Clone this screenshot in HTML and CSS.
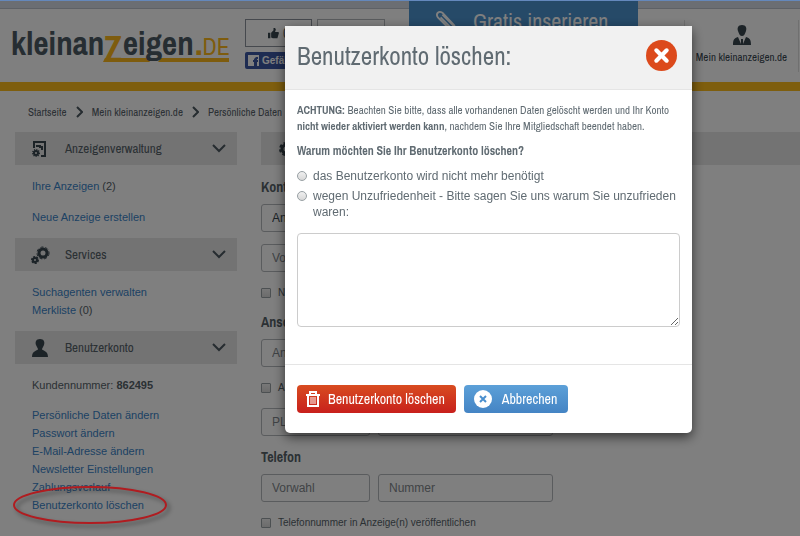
FILE: index.html
```html
<!DOCTYPE html>
<html lang="de">
<head>
<meta charset="utf-8">
<title>Benutzerkonto löschen</title>
<link rel="stylesheet" href="styles.css">
</head>
<body>
<header class="site-header">
  <a class="logo" href="#" aria-label="kleinanzeigen.de">
    <svg width="222" height="40" viewBox="0 0 222 40">
      <text class="logo-word" x="0" y="29">kleinan</text>
      <text class="logo-z" x="93" y="36">Z</text>
      <path class="logo-line" d="M94 32h42l3 4H92zM150 32h68v4h-71z"/>
      <text class="logo-word" x="112" y="29">eigen</text>
      <text class="logo-tld" x="184" y="29"><tspan class="logo-dot">.</tspan>DE</text>
    </svg>
  </a>
  <div class="social">
    <div class="like-count">
      <svg width="11" height="11" viewBox="0 0 14 14"><path fill="#38464f" d="M0 6h3v7H0zM4 6l3-3V0h2l1 2-1 3h4l1 1-2 7H6l-2-1z"/></svg>
      <span>0</span>
    </div>
    <button class="fb" type="button">
      <svg width="11" height="11" viewBox="0 0 11 11"><path fill="#fff" fill-rule="evenodd" d="M0 0h11v11H9V7h1V5H9V4h1V2H8L6 4v1H5v2h1v4H0z"/></svg>
      Gefällt mir
    </button>
  </div>
  <div class="count-box"></div>
  <a class="banner" href="#">
    <svg width="22" height="26" viewBox="0 0 24 26" fill="none" stroke="#fff" stroke-width="2"><path d="M2 9l14 14 6 2-2-7L7 4Q4 2 2 4t0 5zM5 9l12 12M7 6l12 12"/></svg>
    <span>Gratis inserieren</span>
  </a>
  <a class="account" href="#">
    <svg width="18" height="20" viewBox="0 0 18 20"><path fill="#38464f" d="M9 0c4 0 5 3 4 6s-2 5-4 5-3-2-4-5 0-6 4-6zM0 20c0-5 1-7 5-8l3 7V14h2v5l3-7c4 1 5 3 5 8z"/></svg>
    <span>Mein kleinanzeigen.de</span>
  </a>
</header>

<nav class="crumbs" aria-label="Pfad">
  <a href="#">Startseite</a>
  <svg width="7" height="12" viewBox="0 0 7 12"><path d="M1 1l5 5-5 5"/></svg>
  <a href="#">Mein kleinanzeigen.de</a>
  <svg width="7" height="12" viewBox="0 0 7 12"><path d="M1 1l5 5-5 5"/></svg>
  <a href="#">Persönliche Daten</a>
</nav>

<div class="page">
  <aside class="sidebar">
    <h2 class="bar">
      <svg width="20" height="20" viewBox="0 0 20 20"><path fill="none" stroke="#38464f" stroke-width="2" d="M4 9V3h11v14h-4"/><path fill="none" stroke="#38464f" stroke-width="2" d="M6 7h4v1h2v3"/><circle cx="6" cy="14" r="2" fill="none" stroke="#38464f" stroke-width="2"/><circle cx="6" cy="14" r="3" fill="none" stroke="#38464f" stroke-width="2" stroke-dasharray="1 1"/></svg>
      <span>Anzeigenverwaltung</span>
      <svg class="chev" width="14" height="9" viewBox="0 0 14 9"><path d="M1 1l6 6 6-6"/></svg>
    </h2>
    <ul class="links spaced">
      <li><a href="#">Ihre Anzeigen</a> (2)</li>
      <li><a href="#">Neue Anzeige erstellen</a></li>
    </ul>
    <h2 class="bar">
      <svg width="20" height="20" viewBox="0 0 20 20" fill="none" stroke="#38464f"><circle cx="13" cy="8" r="4" stroke-width="3"/><circle cx="13" cy="8" r="6" stroke-width="1" stroke-dasharray="3 2"/><circle cx="5" cy="15" r="2" stroke-width="2"/><circle cx="5" cy="15" r="3" stroke-width="2" stroke-dasharray="2 1"/></svg>
      <span>Services</span>
      <svg class="chev" width="14" height="9" viewBox="0 0 14 9"><path d="M1 1l6 6 6-6"/></svg>
    </h2>
    <ul class="links">
      <li><a href="#">Suchagenten verwalten</a></li>
      <li><a href="#">Merkliste</a> (0)</li>
    </ul>
    <h2 class="bar">
      <svg width="20" height="20" viewBox="0 0 20 20"><path fill="#38464f" d="M10 1c4 0 5 3 4 6l-2 4c0 2 6 1 6 8H2c0-7 6-6 6-8L6 7C5 4 6 1 10 1z"/></svg>
      <span>Benutzerkonto</span>
      <svg class="chev" width="14" height="9" viewBox="0 0 14 9"><path d="M1 1l6 6 6-6"/></svg>
    </h2>
    <p class="customer">Kundennummer: <b>862495</b></p>
    <ul class="links">
      <li><a href="#">Persönliche Daten ändern</a></li>
      <li><a href="#">Passwort ändern</a></li>
      <li><a href="#">E-Mail-Adresse ändern</a></li>
      <li><a href="#">Newsletter Einstellungen</a></li>
      <li><a href="#">Zahlungsverlauf</a></li>
      <li class="marked"><a href="#">Benutzerkonto löschen</a>
        <svg class="ring" width="162" height="44" viewBox="0 0 162 44"><ellipse cx="78" cy="20" rx="76" ry="18"/></svg>
      </li>
    </ul>
  </aside>

  <main class="content">
    <h2 class="bar">
      <svg width="20" height="20" viewBox="0 0 20 20" fill="none" stroke="#38464f"><circle cx="10" cy="10" r="4" stroke-width="3"/><circle cx="10" cy="10" r="6" stroke-width="2" stroke-dasharray="3 2"/></svg>
      <span>Persönliche Daten</span>
    </h2>
    <form class="data-form">
      <h3>Kontaktdaten</h3>
      <div class="row"><select class="short" aria-label="Anrede"><option>Anrede</option></select></div>
      <div class="row"><input class="short" type="text" placeholder="Vorname" aria-label="Vorname"><input class="long" type="text" placeholder="Nachname" aria-label="Nachname"></div>
      <label class="check"><input type="checkbox">Name in Anzeige(n) veröffentlichen</label>
      <h3>Anschrift</h3>
      <div class="row"><input class="full" type="text" placeholder="Anschrift" aria-label="Anschrift"></div>
      <label class="check"><input type="checkbox">Anschrift in Anzeige(n) veröffentlichen</label>
      <div class="row"><input class="short" type="text" placeholder="PLZ" aria-label="PLZ"><input class="long" type="text" placeholder="Ort" aria-label="Ort"></div>
      <h3>Telefon</h3>
      <div class="row"><input class="short" type="text" placeholder="Vorwahl" aria-label="Vorwahl"><input class="long" type="text" placeholder="Nummer" aria-label="Nummer"></div>
      <label class="check"><input type="checkbox">Telefonnummer in Anzeige(n) veröffentlichen</label>
    </form>
  </main>
</div>

<div class="backdrop">
  <form class="modal" role="dialog" aria-labelledby="modal-title">
    <div class="modal-head">
      <h1 id="modal-title">Benutzerkonto löschen:</h1>
      <button class="close" type="button" aria-label="Schließen">
        <svg width="31" height="31" viewBox="0 0 30 30"><circle cx="15" cy="15" r="15" fill="#dc4a1c"/><path stroke="#fff" stroke-width="4" stroke-linecap="round" d="M10 10l10 10M20 10L10 20"/></svg>
      </button>
    </div>
    <div class="modal-body">
      <p class="notice"><b>ACHTUNG:</b> Beachten Sie bitte, dass alle vorhandenen Daten gelöscht werden und Ihr Konto <b>nicht wieder aktiviert werden kann</b>, nachdem Sie Ihre Mitgliedschaft beendet haben.</p>
      <p class="question" id="question">Warum möchten Sie Ihr Benutzerkonto löschen?</p>
      <label class="choice"><input type="radio" name="reason"><span>das Benutzerkonto wird nicht mehr benötigt</span></label>
      <label class="choice"><input type="radio" name="reason"><span>wegen Unzufriedenheit - Bitte sagen Sie uns warum Sie unzufrieden waren:</span></label>
      <textarea aria-labelledby="question"></textarea>
    </div>
    <div class="modal-foot">
      <button class="btn danger" type="button">
        <svg width="14" height="16" viewBox="0 0 14 16" fill="none" stroke="#fff"><path stroke-width="2" d="M0 4h14M2 4v11h10V4M4 3V1h6v2"/><path d="M5 6v7M7 6v7M9 6v7"/></svg>
        Benutzerkonto löschen
      </button>
      <button class="btn cancel" type="button">
        <svg width="18" height="18" viewBox="0 0 18 18"><circle cx="9" cy="9" r="9" fill="#fff"/><path stroke="#4a8fce" stroke-width="2" d="M6 6l6 6M12 6l-6 6"/></svg>
        Abbrechen
      </button>
    </div>
  </form>
</div>
</body>
</html>
```
FILE: styles.css
```css
* { box-sizing: border-box; }

body {
  margin: 0;
  height: 100vh;
  overflow: hidden;
  background: #fff;
  color: #566269;
  font: 11px/18px "Liberation Sans", Arial, sans-serif;
}

h1, h2, h3, p, ul { margin: 0; padding: 0; font-weight: normal; }
ul { list-style: none; }
a { color: #3a84c8; text-decoration: none; }
svg { flex: none; display: block; }

.site-header, .crumbs, .bar, h1, h3, .notice, .question, .btn {
  font-family: "Archivo Narrow", "Roboto Condensed", "Arial Narrow", sans-serif;
}

/* Header */
.site-header {
  display: flex;
  align-items: flex-start;
  height: 91px;
  border-bottom: 9px solid #fcbc1c;
  background: linear-gradient(#d6dce6 8px, #bcc2cc 8px, #bcc2cc 9px, #fff 9px);
}
.logo { width: 234px; padding: 26px 0 0 11px; margin-right: 11px; }
.logo svg { overflow: visible; }
.logo-word { font-size: 33px; font-weight: bold; fill: #4c5a64; }
.logo-z { font-size: 36px; fill: #fcb81c; font-weight: bold; }
.logo-tld { font-size: 24px; fill: #fcb81c; }
.logo-dot { font-size: 33px; font-weight: bold; }
.logo-line { fill: #fcb81c; }
.social { width: 67px; padding-top: 19px; }
.like-count {
  display: flex;
  align-items: center;
  gap: 4px;
  height: 28px;
  padding-left: 22px;
  border: 1px solid #8c929c;
  font-size: 14px;
}
.fb {
  display: flex;
  align-items: center;
  gap: 3px;
  height: 17px;
  margin-top: 5px;
  padding: 0 3px;
  border: 0;
  border-radius: 2px;
  background: #3c58a4;
  color: #fff;
  font: bold 10px "Liberation Sans", sans-serif;
  white-space: nowrap;
}
.count-box { width: 68px; height: 28px; margin: 19px 24px 0 5px; border: 1px solid #b4b8bc; }
.banner {
  display: flex;
  align-items: flex-start;
  gap: 15px;
  width: 229px;
  height: 60px;
  padding: 8px 0 0 27px;
  background: #4c94d0;
  color: #fff;
  font-size: 22px;
  line-height: 26px;
  white-space: nowrap;
}
.account {
  display: flex;
  flex-direction: column;
  align-items: center;
  gap: 3px;
  width: 115px;
  height: 52px;
  margin: 20px 1px 0 auto;
  padding-top: 5px;
  border: solid #e0e0e0;
  border-width: 0 1px;
  color: #38464f;
  white-space: nowrap;
}

/* Breadcrumb */
.crumbs { display: flex; align-items: center; gap: 9px; padding: 12px 28px 11px; white-space: nowrap; }
.crumbs a { color: #59636b; }
.crumbs path, .chev path { fill: none; stroke: #4c5860; stroke-width: 2; }

/* Page columns */
.page { display: flex; gap: 24px; padding-left: 15px; }
.sidebar { width: 222px; flex: none; }
.content { flex: 1; }
.bar {
  display: flex;
  align-items: center;
  gap: 15px;
  height: 33px;
  padding: 0 11px 0 15px;
  background: #e6e6e6;
  font-size: 13px;
}
.chev { margin-left: auto; }
.links { padding: 12px 17px; }
.spaced li + li { margin-top: 13px; }
.customer { padding: 12px 17px 0; }
.marked { position: relative; }
.ring { position: absolute; left: -20px; top: -11px; z-index: 20; filter: drop-shadow(3px 3px 2px rgba(0, 0, 0, .4)); }
.ring ellipse { fill: none; stroke: #b01c20; stroke-width: 2; }

/* Background form */
.data-form { padding-top: 2px; }
.data-form h3 { margin: 11px 0 8px; font-size: 14px; font-weight: bold; line-height: 18px; }
.row { display: flex; gap: 8px; margin-bottom: 12px; }
.row input, .row select {
  height: 28px;
  padding: 0 10px;
  border: 1px solid #b4b8bc;
  border-radius: 3px;
  background: #fff;
  color: #38464f;
  font: 12px "Liberation Sans", sans-serif;
}
.row select { appearance: none; }
.row input::placeholder { color: #81878c; }
.row .short { width: 109px; }
.row .long { width: 175px; }
.row .full { width: 292px; }
.check { display: flex; align-items: center; gap: 7px; font-size: 10px; margin-bottom: 11px; }
.check input, .choice input {
  appearance: none;
  flex: none;
  width: 10px;
  height: 10px;
  margin: 0;
  border: 1px solid #98a0a4;
  border-radius: 1px;
  background: linear-gradient(#f0f0f0, #d8d8d8);
}

/* Modal */
.backdrop {
  position: fixed;
  inset: 0;
  z-index: 10;
  padding: 25px 108px 0 285px;
  border-top: 1px solid #6488bc;
  background: rgba(0, 0, 0, .5);
}
.modal {
  border-radius: 5px;
  background: #fff;
  color: #606b72;
  box-shadow: 0 4px 12px rgba(0, 0, 0, .6);
}
.modal-head {
  display: flex;
  align-items: center;
  justify-content: space-between;
  height: 64px;
  padding: 0 15px 4px 12px;
  border-bottom: 1px solid #e5e5e5;
  background: #f1f1f1;
}
h1 { font-size: 25px; line-height: 32px; }
.close { padding: 0; border: 0; background: none; }
.modal-body { padding: 12px 12px 37px; }
.notice { font-size: 11px; line-height: 16px; }
.question { margin: 8px 0; font-weight: bold; font-size: 12px; }
.choice { display: flex; gap: 6px; margin-bottom: 4px; font-size: 12px; line-height: 16px; }
.choice input { margin-top: 3px; border-radius: 50%; }
textarea {
  display: block;
  width: 100%;
  height: 94px;
  margin-top: 13px;
  border: 1px solid #ccc;
  border-radius: 4px;
  background: #fff;
  resize: both;
}
.modal-foot { display: flex; gap: 8px; padding: 20px 12px; border-top: 1px solid #e5e5e5; }
.btn {
  display: flex;
  align-items: center;
  gap: 8px;
  height: 28px;
  padding: 0 11px 0 9px;
  border: 0;
  border-radius: 4px;
  color: #fff;
  font-size: 14px;
  white-space: nowrap;
}
.danger { background: linear-gradient(#d84c20, #c8201c); }
.cancel { gap: 10px; padding-left: 10px; background: linear-gradient(#5ca0d8, #4484c4); }
```
